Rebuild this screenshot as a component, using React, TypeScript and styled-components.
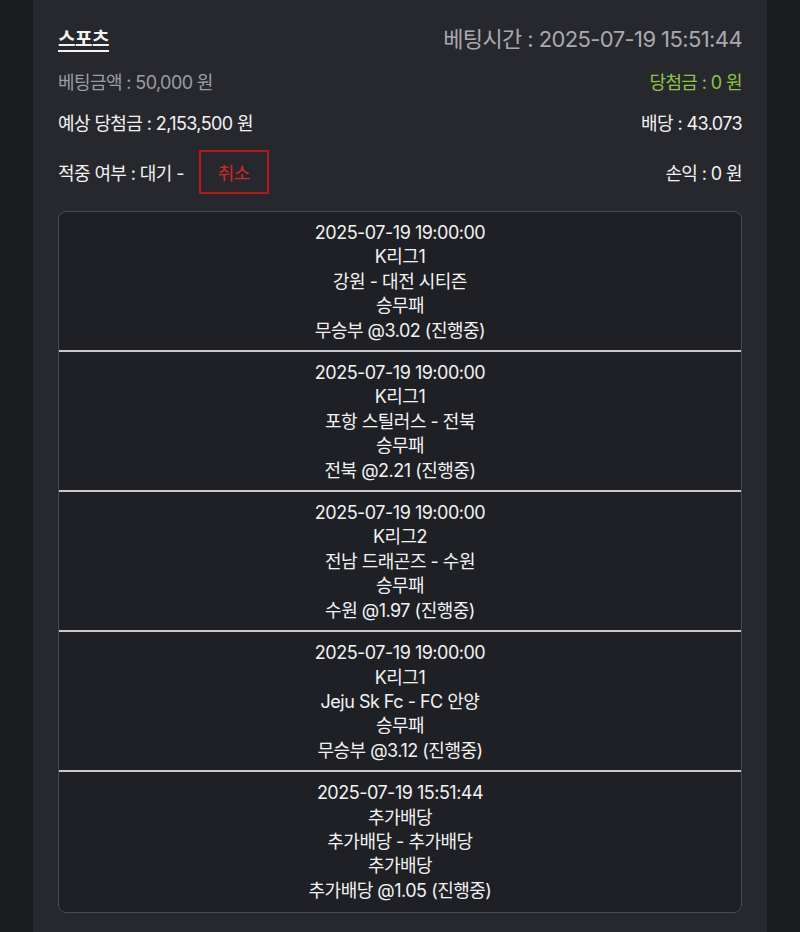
import React from "react";
import styled, { createGlobalStyle } from "styled-components";

const Global = createGlobalStyle`
  html, body { margin: 0; padding: 0; background: #1c1d20; }
  body { font-family: Inter, "Noto Sans CJK KR", sans-serif; color: #f2f2f2; }
`;

const Page = styled.div`
  min-height: 932px;
  background: #1c1d20;
  display: flex;
  justify-content: center;
`;

const Panel = styled.div`
  width: 734px;
  min-height: 932px;
  box-sizing: border-box;
  background: #27282d;
  padding: 22px 25px 20px;
`;

const InfoRow = styled.div<{ $h: number }>`
  display: flex;
  justify-content: space-between;
  align-items: center;
  height: ${(p) => p.$h}px;
`;

const Title = styled.span`
  font-size: 19px;
  font-weight: 600;
  text-decoration: underline;
  text-underline-offset: 4px;
  text-decoration-thickness: 1.5px;
  letter-spacing: -0.5px;
`;

const Text = styled.span<{ $color?: string; $size?: number }>`
  font-size: ${(p) => p.$size ?? 18}px;
  color: ${(p) => p.$color ?? "#f2f2f2"};
  letter-spacing: -0.6px;
  display: flex;
  align-items: center;
`;

const CancelButton = styled.button`
  margin-left: 15px;
  width: 70px;
  height: 44px;
  box-sizing: border-box;
  border: 2px solid #b3191b;
  background: transparent;
  color: #d8262a;
  font-family: inherit;
  font-size: 18px;
  letter-spacing: -0.5px;
  padding: 0;
`;

const Card = styled.div`
  margin-top: 1px;
  border: 1px solid #4b4c52;
  border-radius: 8px;
  background: #1f2025;
  overflow: hidden;
`;

const Match = styled.div<{ $last?: boolean }>`
  padding: 9px 0 ${(p) => (p.$last ? 9 : 7)}px;
  text-align: center;
  border-bottom: ${(p) => (p.$last ? "none" : "2px solid #c9c9cc")};
`;

const Line = styled.div`
  font-size: 18px;
  line-height: 24.4px;
  letter-spacing: -0.5px;
  color: #f2f2f2;
`;

const matches = [
  ["2025-07-19 19:00:00", "K리그1", "강원 - 대전 시티즌", "승무패", "무승부 @3.02 (진행중)"],
  ["2025-07-19 19:00:00", "K리그1", "포항 스틸러스 - 전북", "승무패", "전북 @2.21 (진행중)"],
  ["2025-07-19 19:00:00", "K리그2", "전남 드래곤즈 - 수원", "승무패", "수원 @1.97 (진행중)"],
  ["2025-07-19 19:00:00", "K리그1", "Jeju Sk Fc - FC 안양", "승무패", "무승부 @3.12 (진행중)"],
  ["2025-07-19 15:51:44", "추가배당", "추가배당 - 추가배당", "추가배당", "추가배당 @1.05 (진행중)"],
];

export default function App() {
  return (
    <Page>
      <Global />
      <Panel>
        <InfoRow $h={30}>
          <Title>스포츠</Title>
          <Text $color="#a9aab0" $size={22}>베팅시간 : 2025-07-19 15:51:44</Text>
        </InfoRow>
        <InfoRow $h={58}>
          <Text $color="#9c9da3">베팅금액 : 50,000 원</Text>
          <Text $color="#8cc63f">당첨금 : 0 원</Text>
        </InfoRow>
        <InfoRow $h={24}>
          <Text>예상 당첨금 : 2,153,500 원</Text>
          <Text>배당 : 43.073</Text>
        </InfoRow>
        <InfoRow $h={76}>
          <Text>
            적중 여부 : 대기 -<CancelButton>취소</CancelButton>
          </Text>
          <Text>손익 : 0 원</Text>
        </InfoRow>
        <Card>
          {matches.map((m, i) => (
            <Match key={i} $last={i === matches.length - 1}>
              {m.map((l, j) => (
                <Line key={j}>{l}</Line>
              ))}
            </Match>
          ))}
        </Card>
      </Panel>
    </Page>
  );
}
